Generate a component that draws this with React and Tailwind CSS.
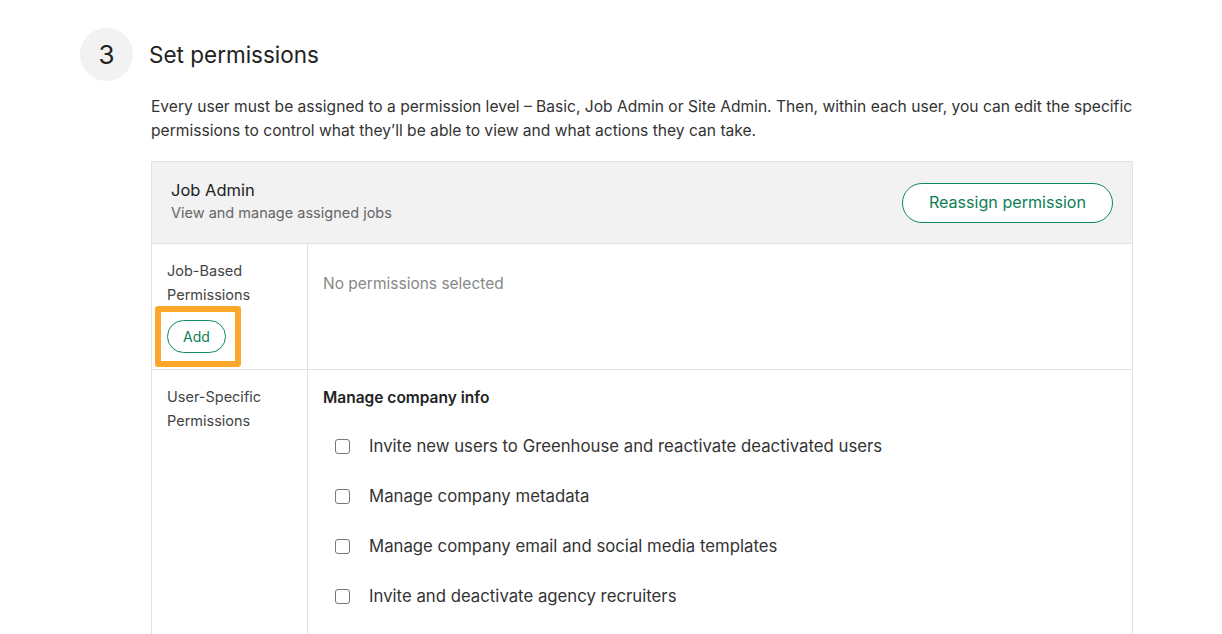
import React from 'react';

const permissions = [
  'Invite new users to Greenhouse and reactivate deactivated users',
  'Manage company metadata',
  'Manage company email and social media templates',
  'Invite and deactivate agency recruiters',
];

const App = () => {
  return (
    <div className="min-h-[634px] bg-white text-[#222] font-['Inter','Liberation_Sans',sans-serif]">
      <div className="pl-[80px] pt-[28px] pr-[89px]">
        {/* step header */}
        <div className="flex items-center gap-[16px]">
          <div className="w-[53px] h-[53px] rounded-full bg-[#f2f2f2] flex items-center justify-center text-[26px] text-[#222]">
            3
          </div>
          <h2 className="text-[22.5px] text-[#222]">Set permissions</h2>
        </div>

        <div className="pl-[71px]">
          <p className="mt-[14px] text-[15.6px] leading-[24px] text-[#333]">
            Every user must be assigned to a permission level – Basic, Job Admin or Site Admin. Then, within each user, you can edit the specific permissions to control what they’ll be able to view and what actions they can take.
          </p>

          <div className="mt-[18px] border border-[#e2e2e2]">
            {/* level header */}
            <div className="bg-[#f2f2f2] h-[82px] flex items-center justify-between px-[19px] border-b border-[#e2e2e2]">
              <div className="-mt-[3px]">
                <div className="text-[16.5px] leading-[24px] text-[#222]">Job Admin</div>
                <div className="text-[14.5px] leading-[22px] text-[#666]">View and manage assigned jobs</div>
              </div>
              <button className="h-[40px] px-[26px] rounded-full border border-[#0b8a5c] bg-white text-[#0b7f55] text-[16.1px]">
                Reassign permission
              </button>
            </div>

            {/* job-based row */}
            <div className="flex border-b border-[#e2e2e2]">
              <div className="w-[156px] shrink-0 border-r border-[#e2e2e2] pl-[15px] pt-[15px] pb-[16px]">
                <div className="text-[14.5px] leading-[24px] text-[#444]">
                  Job-Based<br />Permissions
                </div>
                <div className="relative inline-block mt-[13px]">
                  <button className="h-[33px] px-[15px] rounded-full border border-[#0b8a5c] bg-white text-[#0b7f55] text-[14px]">
                    Add
                  </button>
                  <div className="absolute -left-[12px] -top-[14px] w-[86px] h-[61px] border-[6px] border-[#fba72a] rounded-[3px] pointer-events-none" />
                </div>
              </div>
              <div className="flex-1 pl-[15px] pt-[28px] text-[15.5px] text-[#888]">
                No permissions selected
              </div>
            </div>

            {/* user-specific row */}
            <div className="flex h-[270px]">
              <div className="w-[156px] shrink-0 border-r border-[#e2e2e2] pl-[15px] pt-[15px]">
                <div className="text-[14.5px] leading-[24px] text-[#444]">
                  User-Specific<br />Permissions
                </div>
              </div>
              <div className="flex-1 pl-[15px] pt-[16px]">
                <div className="text-[15.5px] font-semibold text-[#222]">Manage company info</div>
                <div className="mt-[25px] flex flex-col gap-[26px] pl-[12px]">
                  {permissions.map((label) => (
                    <label key={label} className="flex items-center gap-[19px] text-[16.75px] leading-[24px] text-[#333]">
                      <span className="w-[15px] h-[15px] rounded-[3px] border border-[#777] bg-white shrink-0" />
                      {label}
                    </label>
                  ))}
                </div>
              </div>
            </div>
          </div>
        </div>
      </div>
    </div>
  );
};

export default App;
